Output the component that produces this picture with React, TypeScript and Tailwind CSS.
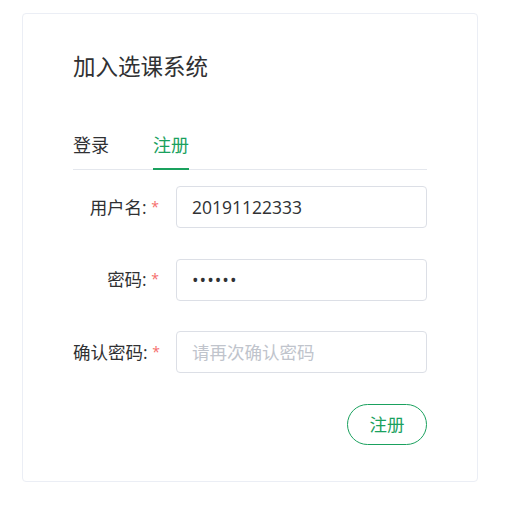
import React from "react";

const font = { fontFamily: '"Open Sans", "Noto Sans CJK SC", sans-serif' };

type Field = {
  label: string;
  type: string;
  value?: string;
  placeholder?: string;
};

const fields: Field[] = [
  { label: "用户名:", type: "text", value: "20191122333" },
  { label: "密码:", type: "password", value: "123456" },
  { label: "确认密码:", type: "password", placeholder: "请再次确认密码" },
];

export default function App() {
  return (
    <div className="h-[509px] w-full bg-white pl-[22px] pt-[13px]" style={font}>
      <div className="h-[469px] w-[456px] rounded-[4px] border border-[#ebeef5] px-[50px] pt-[39px]">
        <h1 className="mb-[52px] text-[22.5px] leading-[28px] text-[#303133]">
          加入选课系统
        </h1>

        <div className="flex border-b border-[#e4e7ed]">
          <div className="-mb-px border-b-2 border-transparent pb-[11px] pr-[44px] text-[18px] leading-[24px] text-[#303133]">
            登录
          </div>
          <div className="-mb-px border-b-2 border-[#1aa15e] pb-[11px] text-[18px] leading-[24px] text-[#1aa15e]">
            注册
          </div>
        </div>

        <form className="mt-[16px] flex flex-col gap-[30.5px]">
          {fields.map((f) => (
            <div key={f.label} className="flex h-[42px] items-center">
              <label className="w-[103px] shrink-0 whitespace-nowrap pr-[17px] text-right text-[17.5px] text-[#303133]">
                {f.label} <span className="align-[2px] text-[14px] text-[#f56c6c]">*</span>
              </label>
              <input
                type={f.type}
                defaultValue={f.value}
                placeholder={f.placeholder}
                readOnly
                className={
                  f.type === "password" && f.value
                    ? "h-[42px] min-w-0 flex-1 rounded-[4px] border border-[#dcdfe6] bg-white px-[15px] text-[17.5px] tracking-[1px] text-[#303133] outline-none"
                    : "h-[42px] min-w-0 flex-1 rounded-[4px] border border-[#dcdfe6] bg-white px-[15px] text-[17.5px] text-[#303133] outline-none placeholder:text-[#c0c4cc]"
                }
              />
            </div>
          ))}
          <div className="flex justify-end">
            <button
              type="button"
              className="h-[41px] w-[80px] rounded-full border border-[#1aa15e] bg-white text-[17.5px] text-[#1aa15e]"
            >
              注册
            </button>
          </div>
        </form>
      </div>
    </div>
  );
}
